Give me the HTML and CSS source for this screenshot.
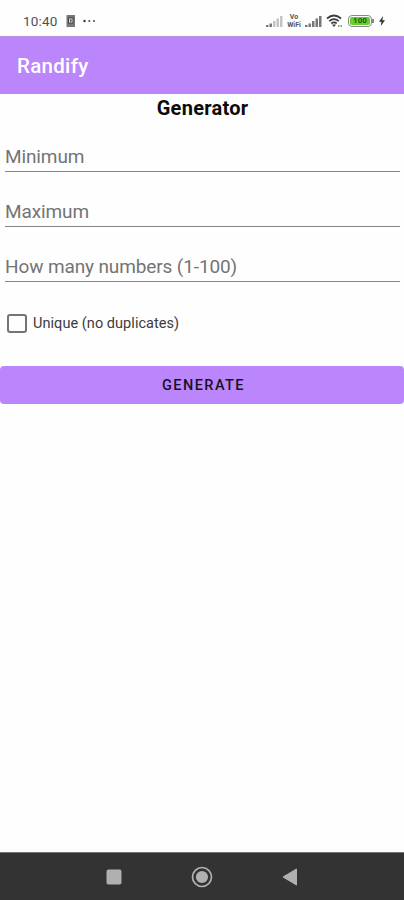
FILE: index.html
```
<!DOCTYPE html>
<html lang="en">
<head>
<meta charset="utf-8">
<title>Randify</title>
<link rel="stylesheet" href="styles.css">
</head>
<body>
<div class="status">
  <span class="time">10:40</span>
  <svg class="notice" width="32" height="14" viewBox="0 0 32 14">
    <rect x="0.5" y="1" width="8.5" height="12" fill="#777"/>
    <rect x="2.5" y="4" width="4.5" height="5" fill="#ddd" stroke="#444"/>
    <rect x="4" y="5.5" width="1.5" height="2" fill="#333"/>
    <circle cx="18.5" cy="7" r="1.2" fill="#333"/><circle cx="23.3" cy="7" r="1.1" fill="#555"/><circle cx="28" cy="7" r="1.1" fill="#555"/>
  </svg>
  <svg class="signal" width="17" height="12" viewBox="0 0 17 12">
    <path d="M0 12V10h2.5v2zM3.5 12V8.500H6V12z" fill="#777"/><path d="M7 12V6h2.500v6zM10.500 12V3.500H13V12zM14 12V1h2.500v11z" fill="#c4c4c4"/>
  </svg>
  <span class="vowifi"><span>Vo</span><span>WiFi</span></span>
  <svg class="signal2" width="17" height="12" viewBox="0 0 17 12">
    <path d="M0 12V10h2.500v2zM3.500 12V8.500H6V12zM7 12V6h2.500v6zM10.500 12V3.500H13V12zM14 12V1h2.500v11z" fill="#777"/>
  </svg>
  <svg class="wifi" width="17" height="14" viewBox="0 0 17 14">
    <g fill="none" stroke="#3c3c3c" stroke-width="1.7"><path d="M1 4.500Q8 -1.500 15 4.500"/><path d="M3.200 7.200Q8 3 12.800 7.200"/><path d="M5.300 9.500Q8 7.300 10.700 9.500"/></g>
    <path d="M6 10.500h4L8 13z" fill="#3c3c3c"/><path d="M12 11h1.500v2H12zM14.500 11H16v2h-1.500z" fill="#999"/>
  </svg>
  <span class="battery"><span class="charge">100</span></span>
  <svg class="bolt" width="8" height="12" viewBox="0 0 8 12"><path d="M5 1L1 6.800H3.400L2.800 11L7 5.200H4.400z" fill="#333"/></svg>
</div>
<header class="appbar">Randify</header>
<main>
  <h1>Generator</h1>
  <div class="field">Minimum</div>
  <div class="field">Maximum</div>
  <div class="field">How many numbers (1-100)</div>
  <div class="check"><span class="box"></span><span class="label">Unique (no duplicates)</span></div>
  <div class="button">GENERATE</div>
</main>
<nav>
  <svg width="16" height="16" viewBox="0 0 16 16"><rect x="0.500" y="0.500" width="15" height="15" rx="2" fill="#b0b0b0"/></svg>
  <svg class="home" width="22" height="22" viewBox="0 0 22 22"><circle cx="11" cy="11" r="9.500" fill="none" stroke="#b0b0b0" stroke-width="1.700"/><circle cx="11" cy="11" r="6.100" fill="#b0b0b0"/></svg>
  <svg class="back" width="16" height="18" viewBox="0 0 16 18"><path d="M14.500 1V17L1 9z" fill="#b0b0b0" stroke="#b0b0b0" stroke-linejoin="round"/></svg>
</nav>
</body>
</html>
```
FILE: styles.css
```
* { box-sizing: border-box; }
body {
  margin: 0;
  width: 404px;
  height: 900px;
  display: flex;
  flex-direction: column;
  overflow: hidden;
  background: #fefefe;
  font-family: Roboto, sans-serif;
}
svg { display: block; flex: none; }
.status {
  height: 36px;
  flex: none;
  display: flex;
  align-items: center;
  padding: 6px 18px 0 23px;
}
.time { width: 43px; font-size: 13.5px; letter-spacing: 0.2px; color: #505050; }
.signal { margin-left: auto; }
.vowifi {
  width: 16px;
  margin: 0 3px 0 3px;
  display: flex;
  flex-direction: column;
  align-items: center;
  font-size: 7px;
  line-height: 8px;
  font-weight: 700;
  color: #555;
}
.wifi { margin: 0 5px 0 4px; }
.battery {
  position: relative;
  width: 24px;
  height: 12px;
  padding: 1px;
  border: 1px solid #888;
  border-radius: 4px;
}
.battery::after {
  content: "";
  position: absolute;
  right: -3px;
  top: 3px;
  width: 2px;
  height: 4px;
  background: #888;
}
.charge {
  display: block;
  height: 8px;
  border-radius: 2px;
  background: #66cf2c;
  color: #1d5a0c;
  font-size: 8px;
  line-height: 8px;
  font-weight: 700;
  text-align: center;
}
.bolt { margin-left: 6px; }
.appbar {
  height: 58px;
  flex: none;
  padding: 0 17px;
  border-top: 1px solid #b491dd;
  background: #bb86fc;
  color: #fff;
  font-size: 20.500px;
  font-weight: 500;
  line-height: 58px;
  letter-spacing: 0.3px;
}
main { flex: 1; }
h1 {
  margin: 0 0 8px;
  padding-left: 1px;
  height: 29px;
  font-size: 20px;
  line-height: 29px;
  font-weight: 700;
  letter-spacing: 0.250px;
  text-align: center;
  color: #0c0c0c;
}
.field {
  height: 41px;
  margin: 0 4px 14px 5px;
  border-bottom: 1px solid #858585;
  font-size: 19px;
  line-height: 52px;
  letter-spacing: -0.120px;
  color: #747474;
  white-space: nowrap;
}
.check { display: flex; align-items: center; height: 20px; margin: 31px 0 0 7px; }
.box { width: 20px; height: 19px; border: 2px solid #747474; border-radius: 3px; }
.label { margin-left: 6px; font-size: 14.500px; letter-spacing: 0.050px; color: #3c3c3c; }
.button {
  height: 38px;
  margin-top: 33px;
  border-radius: 4px;
  background: #bb86fc;
  color: #1a1026;
  font-size: 14.500px;
  line-height: 39px;
  font-weight: 500;
  letter-spacing: 1.450px;
  text-indent: 3px;
  text-align: center;
}
nav {
  height: 48px;
  flex: none;
  display: flex;
  align-items: center;
  padding-left: 106px;
  border-top: 1px solid #777;
  background: #333;
}
.home { margin-left: 69px; }
.back { margin-left: 69px; }
```
